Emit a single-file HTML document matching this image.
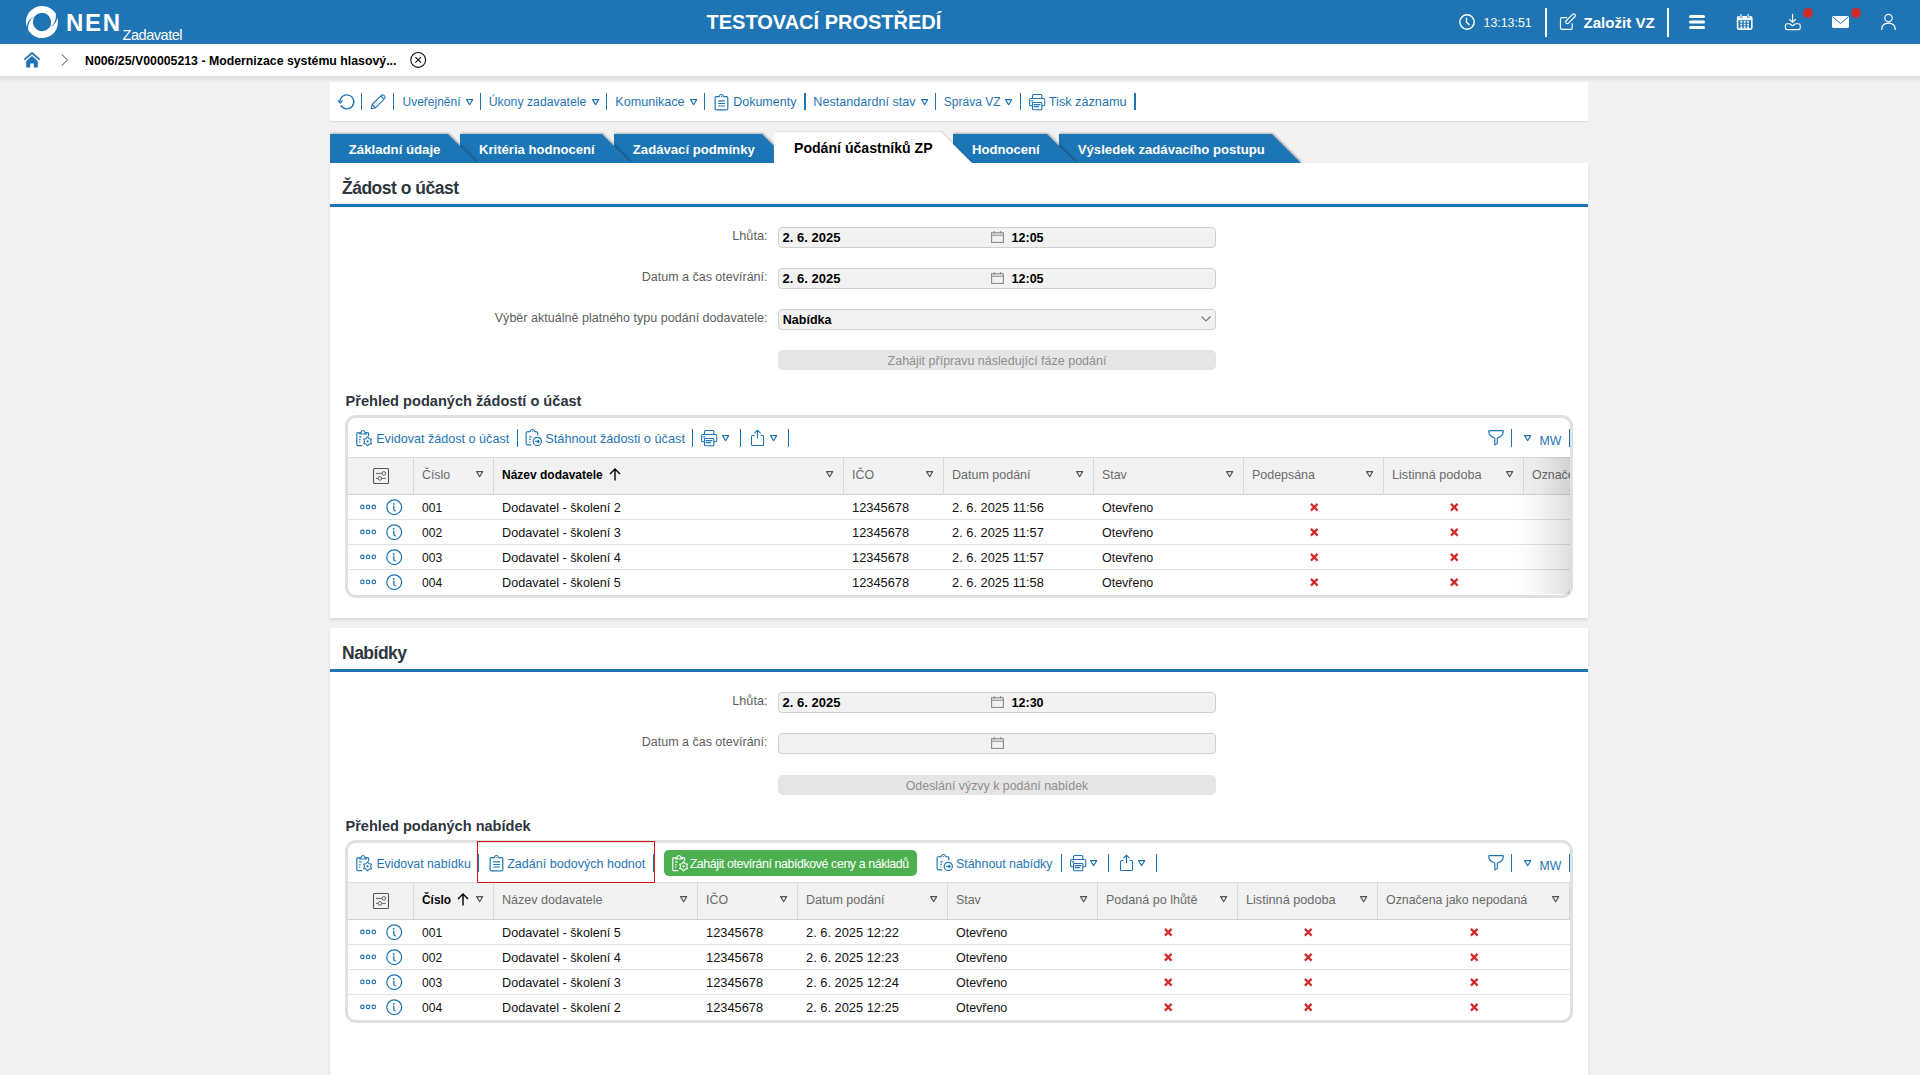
<!DOCTYPE html>
<html><head><meta charset="utf-8"><title>NEN</title>
<style>
html,body{margin:0;padding:0;width:1920px;height:1075px;overflow:hidden;background:#f2f2f2;font-family:"Liberation Sans",sans-serif;}
.t{position:absolute;line-height:1.117;white-space:nowrap;}
svg{overflow:visible}
</style></head><body>

<div style="position:absolute;left:0px;top:0px;width:1920px;height:44px;background:#1f75b4"></div>
<svg style="position:absolute;left:25px;top:6px;" width="34" height="33" viewBox="0 0 34 33"><path d="M1.62 20.41 A16 16 0 0 1 30.86 8.00 Q31.75 17.16 24.23 21.85 A9.3 9.3 0 1 0 9.57 10.40 Q2.62 13.46 1.62 20.41 Z" fill="#fff"/><path d="M32.38 11.59 A16 16 0 0 1 3.14 24.00 Q2.25 14.84 9.77 10.15 A9.3 9.3 0 1 0 24.43 21.60 Q31.38 18.54 32.38 11.59 Z" fill="#fff"/></svg>
<div class="t" style="left:66px;top:10.280px;font-size:24px;font-weight:700;color:#fff;letter-spacing:1.7px">NEN</div>
<div class="t" style="left:122.5px;top:26.877px;font-size:14.5px;font-weight:400;color:#fff;letter-spacing:-0.45px">Zadavatel</div>
<div class="t" style="left:706.5px;top:10.900px;font-size:20px;font-weight:700;color:#fff;">TESTOVACÍ PROSTŘEDÍ</div>
<svg style="position:absolute;left:1459px;top:14px;" width="16" height="16" viewBox="0 0 16 16"><circle cx="8" cy="8" r="7.2" fill="none" stroke="#fff" stroke-width="1.4"/><path d="M7.5 3.8 V8.2 L10.5 11" fill="none" stroke="#fff" stroke-width="1.4"/></svg>
<div class="t" style="left:1483.5px;top:16.778px;font-size:12.4px;font-weight:400;color:#fff;">13:13:51</div>
<div style="position:absolute;left:1545px;top:8px;width:2px;height:29px;background:#fff"></div>
<svg style="position:absolute;left:1559px;top:14px;" width="18" height="17" viewBox="0 0 18 17"><path d="M8 3.7 H2.9 Q1.5 3.7 1.5 5.1 V13.9 Q1.5 15.3 2.9 15.3 H11.8 Q13.2 15.3 13.2 13.9 V9.3" fill="none" stroke="#fff" stroke-width="1.2"/><rect x="5.45" y="3.1" width="12.2" height="3.3" rx="1.65" fill="none" stroke="#fff" stroke-width="1.2" transform="rotate(-45 11.55 4.75)"/></svg>
<div class="t" style="left:1583.5px;top:15.335px;font-size:15.1px;font-weight:700;color:#fff;">Založit VZ</div>
<div style="position:absolute;left:1667px;top:8px;width:2px;height:29px;background:#fff"></div>
<svg style="position:absolute;left:1689px;top:15px;" width="16" height="14" viewBox="0 0 16 14"><rect x="0" y="0" width="16" height="3" rx="1.5" fill="#fff"/><rect x="0" y="5.5" width="16" height="3" rx="1.5" fill="#fff"/><rect x="0" y="11" width="16" height="3" rx="1.5" fill="#fff"/></svg>
<svg style="position:absolute;left:1736px;top:14px;" width="17" height="16" viewBox="0 0 17 16"><rect x="1.6" y="2.9" width="14.2" height="12.2" rx="1.3" fill="none" stroke="#fff" stroke-width="1.6"/>
<rect x="1.6" y="2.9" width="14.2" height="3.3" fill="#fff"/>
<rect x="3.7" y="-0.3" width="2.6" height="4.4" fill="#1f75b4"/><rect x="10.9" y="-0.3" width="2.6" height="4.4" fill="#1f75b4"/>
<rect x="4.45" y="0" width="1.1" height="3.9" fill="#fff"/><rect x="11.65" y="0" width="1.1" height="3.9" fill="#fff"/>
<g fill="#fff"><rect x="4.3" y="7.0" width="1.9" height="1.7"/><rect x="7.75" y="7.0" width="1.9" height="1.7"/><rect x="11.1" y="7.0" width="1.9" height="1.7"/><rect x="4.3" y="9.7" width="1.9" height="1.7"/><rect x="7.75" y="9.7" width="1.9" height="1.7"/><rect x="11.1" y="9.7" width="1.9" height="1.7"/><rect x="4.3" y="12.4" width="1.9" height="1.7"/><rect x="7.75" y="12.4" width="1.9" height="1.7"/><rect x="11.1" y="12.4" width="1.9" height="1.7"/></g></svg>
<svg style="position:absolute;left:1784px;top:13px;" width="18" height="18" viewBox="0 0 18 18"><path d="M3.2 10.7 H5 Q6.3 10.7 7 11.6 Q8.6 13.6 10.2 11.6 Q10.9 10.7 12.2 10.7 H14.4 Q16.2 10.7 16.2 12.5 V14.9 Q16.2 16.6 14.4 16.6 H3.2 Q1.4 16.6 1.4 14.9 V12.5 Q1.4 10.7 3.2 10.7 Z" fill="none" stroke="#fff" stroke-width="1.15"/><path d="M8.6 1.2 V9.3 M5.7 6.5 L8.6 9.4 L11.5 6.5" fill="none" stroke="#fff" stroke-width="1.15" stroke-linecap="round" stroke-linejoin="round"/></svg>
<svg style="position:absolute;left:1803px;top:8px;" width="10" height="10" viewBox="0 0 10 10"><circle cx="5" cy="5" r="5" fill="#d12a2a"/></svg>
<svg style="position:absolute;left:1832px;top:16px;" width="17" height="12" viewBox="0 0 17 12"><rect x="0" y="0" width="17" height="12" rx="1.5" fill="#fff"/><path d="M1 1.2 L8.5 7.5 L16 1.2" fill="none" stroke="#1f75b4" stroke-width="1"/></svg>
<svg style="position:absolute;left:1851px;top:8px;" width="10" height="10" viewBox="0 0 10 10"><circle cx="5" cy="5" r="5" fill="#d12a2a"/></svg>
<svg style="position:absolute;left:1880px;top:14px;" width="17" height="17" viewBox="0 0 17 17"><circle cx="8.5" cy="4.1" r="3.7" fill="none" stroke="#fff" stroke-width="1.15"/><path d="M1.7 16 Q1.7 9.1 8.5 9.1 Q15.3 9.1 15.3 16" fill="none" stroke="#fff" stroke-width="1.15"/></svg>
<div style="position:absolute;left:0px;top:44px;width:1920px;height:32px;background:#fff"></div>
<div style="position:absolute;left:0px;top:76px;width:1920px;height:6px;background:linear-gradient(#dcdcdc,#f2f2f2)"></div>
<svg style="position:absolute;left:24px;top:52px;" width="16" height="16" viewBox="0 0 16 16"><path d="M1 7.2 L8 1 L15 7.2" fill="none" stroke="#1f75b4" stroke-width="1.8" stroke-linejoin="round" stroke-linecap="round"/><path d="M2.2 9 L8 4 L13.8 9 V15.5 H9.8 V11.5 H6.2 V15.5 H2.2 Z" fill="#1f75b4"/></svg>
<svg style="position:absolute;left:61px;top:54px;" width="8" height="12" viewBox="0 0 8 12"><path d="M0.8 0.5 L6.5 6 L0.8 11.5" fill="none" stroke="#445" stroke-width="1"/></svg>
<div class="t" style="left:85px;top:54.850px;font-size:12.32px;font-weight:700;color:#000;">N006/25/V00005213 - Modernizace systému hlasový...</div>
<svg style="position:absolute;left:410px;top:52px;" width="17" height="16" viewBox="0 0 17 16"><circle cx="8.2" cy="7.9" r="7.4" fill="none" stroke="#111" stroke-width="1.15"/><path d="M5.4 5.1 L11 10.7 M11 5.1 L5.4 10.7" stroke="#111" stroke-width="1.15"/></svg>
<div style="position:absolute;left:330px;top:82px;width:1258px;height:39px;background:#fff;box-shadow:0 1px 1px rgba(0,0,0,0.08)"></div>
<svg style="position:absolute;left:338px;top:94px;" width="17" height="16" viewBox="0 0 17 16"><path d="M1.9 7 A7 7 0 1 1 2.8 11.4" fill="none" stroke="#1f75b4" stroke-width="1.35"/><path d="M0.2 6.3 L2.1 9 L4.5 6.6" fill="none" stroke="#1f75b4" stroke-width="1.35" stroke-linejoin="round"/></svg>
<div style="position:absolute;left:360.75px;top:93px;width:1.5px;height:17px;background:#1f75b4"></div>
<svg style="position:absolute;left:370px;top:94px;" width="16" height="16" viewBox="0 0 16 16"><path d="M1.2 14.8 L2.2 10.5 L11.3 1.4 Q12.5 0.3 13.8 1.4 L14.6 2.2 Q15.7 3.5 14.6 4.7 L5.5 13.8 Z M10.8 2 L14 5.2 M2.2 10.5 L5.5 13.8" fill="none" stroke="#1f75b4" stroke-width="1.1" stroke-linejoin="round"/></svg>
<div style="position:absolute;left:392.75px;top:93px;width:1.5px;height:17px;background:#1f75b4"></div>
<div class="t" style="left:402.5px;top:96.140px;font-size:12px;font-weight:400;color:#1f75b4;">Uveřejnění</div>
<svg style="position:absolute;left:465.5px;top:99px;" width="7.3" height="6.3" viewBox="0 0 7.3 6.3"><path d="M0.6 0.6 H6.7 L3.65 5.7 Z" fill="none" stroke="#1f75b4" stroke-width="1.15" stroke-linejoin="round"/></svg>
<div style="position:absolute;left:479.65px;top:93px;width:1.5px;height:17px;background:#1f75b4"></div>
<div class="t" style="left:488.7px;top:95.868px;font-size:12.3px;font-weight:400;color:#1f75b4;">Úkony zadavatele</div>
<svg style="position:absolute;left:591.8px;top:99px;" width="7.3" height="6.3" viewBox="0 0 7.3 6.3"><path d="M0.6 0.6 H6.7 L3.65 5.7 Z" fill="none" stroke="#1f75b4" stroke-width="1.15" stroke-linejoin="round"/></svg>
<div style="position:absolute;left:605.85px;top:93px;width:1.5px;height:17px;background:#1f75b4"></div>
<div class="t" style="left:615.3px;top:94.597px;font-size:12.6px;font-weight:400;color:#1f75b4;">Komunikace</div>
<svg style="position:absolute;left:689.8px;top:99px;" width="7.3" height="6.3" viewBox="0 0 7.3 6.3"><path d="M0.6 0.6 H6.7 L3.65 5.7 Z" fill="none" stroke="#1f75b4" stroke-width="1.15" stroke-linejoin="round"/></svg>
<div style="position:absolute;left:703.85px;top:93px;width:1.5px;height:17px;background:#1f75b4"></div>
<svg style="position:absolute;left:714px;top:94px;" width="15" height="16" viewBox="0 0 15 16"><path d="M4.2 2.7 H2.3 Q1.1 2.7 1.1 3.9 V14.6 Q1.1 15.8 2.3 15.8 H12.6 Q13.8 15.8 13.8 14.6 V3.9 Q13.8 2.7 12.6 2.7 H10.7" fill="none" stroke="#1f75b4" stroke-width="1.2"/><path d="M3.9 3.4 Q4.3 2.4 5.4 2.3 Q5.8 0.5 7.45 0.5 Q9.1 0.5 9.5 2.3 Q10.6 2.4 11 3.4" fill="none" stroke="#1f75b4" stroke-width="1.2"/><circle cx="7.45" cy="2.5" r="0.6" fill="#1f75b4"/><path d="M4.2 6.9 H10.9 M4.2 9.5 H10.9 M4.2 12 H10.9" stroke="#1f75b4" stroke-width="1.2"/></svg>
<div class="t" style="left:733.2px;top:95.688px;font-size:12.5px;font-weight:400;color:#1f75b4;">Dokumenty</div>
<div style="position:absolute;left:804.25px;top:93px;width:1.5px;height:17px;background:#1f75b4"></div>
<div class="t" style="left:813.3px;top:94.597px;font-size:12.6px;font-weight:400;color:#1f75b4;">Nestandardní stav</div>
<svg style="position:absolute;left:920.8px;top:99px;" width="7.3" height="6.3" viewBox="0 0 7.3 6.3"><path d="M0.6 0.6 H6.7 L3.65 5.7 Z" fill="none" stroke="#1f75b4" stroke-width="1.15" stroke-linejoin="round"/></svg>
<div style="position:absolute;left:934.75px;top:93px;width:1.5px;height:17px;background:#1f75b4"></div>
<div class="t" style="left:943.8px;top:96.140px;font-size:12px;font-weight:400;color:#1f75b4;">Správa VZ</div>
<svg style="position:absolute;left:1005.3px;top:99px;" width="7.3" height="6.3" viewBox="0 0 7.3 6.3"><path d="M0.6 0.6 H6.7 L3.65 5.7 Z" fill="none" stroke="#1f75b4" stroke-width="1.15" stroke-linejoin="round"/></svg>
<div style="position:absolute;left:1019.75px;top:93px;width:1.5px;height:17px;background:#1f75b4"></div>
<svg style="position:absolute;left:1029px;top:93px;" width="17" height="18" viewBox="0 0 17 18"><rect x="3.5" y="1.5" width="9.3" height="5" rx="1" fill="none" stroke="#1f75b4" stroke-width="1.1"/><rect x="0.55" y="5.5" width="15.2" height="7.2" rx="1.3" fill="#fff" stroke="#1f75b4" stroke-width="1.1"/><path d="M2.3 7.9 H3.9" stroke="#1f75b4" stroke-width="1.1" stroke-linecap="round"/><rect x="3.5" y="9.5" width="9.3" height="7.3" rx="0.8" fill="#fff" stroke="#1f75b4" stroke-width="1.1"/><path d="M5 11.6 H11 M5 13.6 H9.6" stroke="#1f75b4" stroke-width="1.1" stroke-linecap="round"/></svg>
<div class="t" style="left:1048.8px;top:94.507px;font-size:12.7px;font-weight:400;color:#1f75b4;">Tisk záznamu</div>
<div style="position:absolute;left:1134.05px;top:93px;width:1.5px;height:17px;background:#1f75b4"></div>
<svg style="position:absolute;left:0px;top:0px;" width="1920" height="170" viewBox="0 0 1920 170"><defs><filter id="sh" x="-10%" y="-50%" width="120%" height="200%"><feDropShadow dx="1" dy="-1" stdDeviation="0.8" flood-color="#000" flood-opacity="0.28"/></filter><filter id="sh2" x="-10%" y="-50%" width="120%" height="200%"><feDropShadow dx="1" dy="-0.6" stdDeviation="0.7" flood-color="#000" flood-opacity="0.12"/></filter></defs><path d="M1059 163 V134 H1272 L1301 163 Z" fill="#1f75b4" filter="url(#sh)"/><path d="M953 163 V134 H1047 L1076 163 Z" fill="#1f75b4" filter="url(#sh)"/><path d="M614 163 V134 H762 L791 163 Z" fill="#1f75b4" filter="url(#sh)"/><path d="M460 163 V134 H602 L631 163 Z" fill="#1f75b4" filter="url(#sh)"/><path d="M330 163 V134 H448 L477 163 Z" fill="#1f75b4" filter="url(#sh)"/><path d="M774 163 V132 H941 L972 163 Z" fill="#fff" filter="url(#sh2)"/></svg>
<div class="t" style="left:348.8px;top:143.054px;font-size:13.2px;font-weight:700;color:#fff;">Základní údaje</div>
<div class="t" style="left:479px;top:143.144px;font-size:13.1px;font-weight:700;color:#fff;">Kritéria hodnocení</div>
<div class="t" style="left:632.8px;top:143.099px;font-size:13.15px;font-weight:700;color:#fff;">Zadávací podmínky</div>
<div class="t" style="left:794px;top:141.239px;font-size:14.1px;font-weight:700;color:#000;">Podání účastníků ZP</div>
<div class="t" style="left:972px;top:143.144px;font-size:13.1px;font-weight:700;color:#fff;">Hodnocení</div>
<div class="t" style="left:1077.8px;top:143.099px;font-size:13.15px;font-weight:700;color:#fff;">Výsledek zadávacího postupu</div>
<div style="position:absolute;left:330px;top:163px;width:1258px;height:455px;background:#fff;box-shadow:0 2px 3px rgba(0,0,0,0.10)"></div>
<div class="t" style="left:342px;top:179.162px;font-size:17.5px;font-weight:700;color:#2e3640;letter-spacing:-0.5px">Žádost o účast</div>
<div style="position:absolute;left:330px;top:204px;width:1258px;height:3px;background:#1f75b4"></div>
<div class="t" style="right:1152.5px;top:228.506px;font-size:12.7px;font-weight:400;color:#5e5e5e;">Lhůta:</div>
<div style="position:absolute;left:778px;top:227px;width:438px;height:21px;box-sizing:border-box;background:#f2f2f2;border:1px solid #cfcfcf;border-radius:4px"></div>
<div class="t" style="left:782.6px;top:231.235px;font-size:13px;font-weight:700;color:#000;">2. 6. 2025</div>
<svg style="position:absolute;left:991px;top:231px;" width="13" height="12" viewBox="0 0 13 12"><rect x="0.6" y="1.8" width="11.8" height="9.6" fill="none" stroke="#8a8a8a" stroke-width="1.1"/><path d="M0.6 4.3 H12.4 M3.3 0 V2.6 M9.7 0 V2.6" stroke="#8a8a8a" stroke-width="1.1"/></svg>
<div class="t" style="left:1011.6px;top:231.688px;font-size:12.5px;font-weight:700;color:#000;">12:05</div>
<div class="t" style="right:1152.5px;top:270.688px;font-size:12.5px;font-weight:400;color:#5e5e5e;">Datum a čas otevírání:</div>
<div style="position:absolute;left:778px;top:268px;width:438px;height:21px;box-sizing:border-box;background:#f2f2f2;border:1px solid #cfcfcf;border-radius:4px"></div>
<div class="t" style="left:782.6px;top:272.235px;font-size:13px;font-weight:700;color:#000;">2. 6. 2025</div>
<svg style="position:absolute;left:991px;top:272px;" width="13" height="12" viewBox="0 0 13 12"><rect x="0.6" y="1.8" width="11.8" height="9.6" fill="none" stroke="#8a8a8a" stroke-width="1.1"/><path d="M0.6 4.3 H12.4 M3.3 0 V2.6 M9.7 0 V2.6" stroke="#8a8a8a" stroke-width="1.1"/></svg>
<div class="t" style="left:1011.6px;top:272.688px;font-size:12.5px;font-weight:700;color:#000;">12:05</div>
<div class="t" style="right:1152.5px;top:310.642px;font-size:12.55px;font-weight:400;color:#5e5e5e;">Výběr aktuálně platného typu podání dodavatele:</div>
<div style="position:absolute;left:778px;top:309px;width:438px;height:21px;box-sizing:border-box;background:#f2f2f2;border:1px solid #cfcfcf;border-radius:4px"></div>
<div class="t" style="left:782.8px;top:313.688px;font-size:12.5px;font-weight:700;color:#000;">Nabídka</div>
<svg style="position:absolute;left:1201px;top:316px;" width="10" height="6" viewBox="0 0 10 6"><path d="M0.5 0.5 L5 5 L9.5 0.5" fill="none" stroke="#777" stroke-width="1.1"/></svg>
<div style="position:absolute;left:778px;top:350px;width:438px;height:20px;background:#e5e5e5;border-radius:5px"></div>
<div class="t" style="left:997px;transform:translateX(-50%);top:354.688px;font-size:12.5px;font-weight:400;color:#8f8f8f;">Zahájit přípravu následující fáze podání</div>
<div class="t" style="left:345.5px;top:392.787px;font-size:14.6px;font-weight:700;color:#2e3640;">Přehled podaných žádostí o účast</div>
<div style="position:absolute;left:345px;top:415px;width:1228px;height:183px;box-sizing:border-box;border:3px solid #dfe0e1;border-radius:11px;background:#fff"></div>
<svg style="position:absolute;left:356px;top:430px;" width="17" height="17" viewBox="0 0 17 17"><path d="M6.3 15.6 H1.6 Q0.8 15.6 0.8 14.8 V3.6 Q0.8 2.8 1.6 2.8 H3.8 M10 2.8 H12 Q12.6 2.8 12.6 3.6 V6.2" fill="none" stroke="#1f75b4" stroke-width="1.15"/>
<path d="M3.8 4 V2.6 H5 Q5.3 0.5 7 0.5 Q8.7 0.5 9 2.6 H10.2 V4 Z" fill="none" stroke="#1f75b4" stroke-width="1.15"/>
<path d="M3.2 6.9 H5.5 M3.2 9.7 H4.6 M3.2 12.2 H4.2" stroke="#1f75b4" stroke-width="1.2"/>
<path d="M11.60 6.90 L13.15 8.72 L15.50 9.15 L14.70 11.40 L15.50 13.65 L13.15 14.08 L11.60 15.90 L10.05 14.08 L7.70 13.65 L8.50 11.40 L7.70 9.15 L10.05 8.72 Z" fill="none" stroke="#1f75b4" stroke-width="1.1" stroke-linejoin="round"/>
<circle cx="11.6" cy="11.4" r="1.1" fill="#1f75b4"/></svg>
<div class="t" style="left:376.2px;top:431.597px;font-size:12.6px;font-weight:400;color:#1f75b4;">Evidovat žádost o účast</div>
<div style="position:absolute;left:516.75px;top:429px;width:1.5px;height:18px;background:#1f75b4"></div>
<svg style="position:absolute;left:525px;top:428.8px;" width="18" height="18" viewBox="0 0 18 18"><path d="M6.2 15.8 H2.3 Q1.1 15.8 1.1 14.6 V3.9 Q1.1 2.7 2.3 2.7 H4.2 M10.7 2.7 H11.6 Q12.8 2.7 12.8 3.9 V6.4" fill="none" stroke="#1f75b4" stroke-width="1.15"/>
<path d="M3.9 3.4 Q4.3 2.4 5.4 2.3 Q5.8 0.5 7.45 0.5 Q9.1 0.5 9.5 2.3 Q10.6 2.4 11 3.4" fill="none" stroke="#1f75b4" stroke-width="1.15"/><circle cx="7.45" cy="2.5" r="0.6" fill="#1f75b4"/>
<path d="M4.2 7.9 H6.6 M4.2 10.4 H5.8 M4.2 13 H5.5" stroke="#1f75b4" stroke-width="1.2"/>
<circle cx="12.3" cy="12.4" r="4.1" fill="#fff" stroke="#1f75b4" stroke-width="1.15"/>
<path d="M10.1 12.4 H14.3 M12.7 10.8 L14.3 12.4 L12.7 14" fill="none" stroke="#1f75b4" stroke-width="1.15" stroke-linejoin="round"/></svg>
<div class="t" style="left:545.3px;top:432.461px;font-size:12.75px;font-weight:400;color:#1f75b4;">Stáhnout žádosti o účast</div>
<div style="position:absolute;left:691.75px;top:429px;width:1.5px;height:18px;background:#1f75b4"></div>
<svg style="position:absolute;left:701px;top:429px;" width="17" height="18" viewBox="0 0 17 18"><rect x="3.5" y="1.5" width="9.3" height="5" rx="1" fill="none" stroke="#1f75b4" stroke-width="1.1"/><rect x="0.55" y="5.5" width="15.2" height="7.2" rx="1.3" fill="#fff" stroke="#1f75b4" stroke-width="1.1"/><path d="M2.3 7.9 H3.9" stroke="#1f75b4" stroke-width="1.1" stroke-linecap="round"/><rect x="3.5" y="9.5" width="9.3" height="7.3" rx="0.8" fill="#fff" stroke="#1f75b4" stroke-width="1.1"/><path d="M5 11.6 H11 M5 13.6 H9.6" stroke="#1f75b4" stroke-width="1.1" stroke-linecap="round"/></svg>
<svg style="position:absolute;left:721.5px;top:435px;" width="7.3" height="6.3" viewBox="0 0 7.3 6.3"><path d="M0.6 0.6 H6.7 L3.65 5.7 Z" fill="none" stroke="#1f75b4" stroke-width="1.15" stroke-linejoin="round"/></svg>
<div style="position:absolute;left:739.75px;top:429px;width:1.5px;height:18px;background:#1f75b4"></div>
<svg style="position:absolute;left:750px;top:429px;" width="15" height="18" viewBox="0 0 15 18"><path d="M4.3 6.5 H2.6 Q1.5 6.5 1.5 7.6 V15.4 Q1.5 16.5 2.6 16.5 H12.4 Q13.5 16.5 13.5 15.4 V7.6 Q13.5 6.5 12.4 6.5 H10.7" fill="none" stroke="#1f75b4" stroke-width="1.1"/><path d="M7.5 9 V1.3 M4.8 3.9 L7.5 1.2 L10.2 3.9" fill="none" stroke="#1f75b4" stroke-width="1.1" stroke-linecap="round" stroke-linejoin="round"/></svg>
<svg style="position:absolute;left:770px;top:435px;" width="7.3" height="6.3" viewBox="0 0 7.3 6.3"><path d="M0.6 0.6 H6.7 L3.65 5.7 Z" fill="none" stroke="#1f75b4" stroke-width="1.15" stroke-linejoin="round"/></svg>
<div style="position:absolute;left:787.85px;top:429px;width:1.5px;height:18px;background:#1f75b4"></div>
<svg style="position:absolute;left:1487px;top:429px;" width="18" height="18" viewBox="0 0 18 18"><path d="M2.4 1.6 H15.6 Q16.5 1.6 16.4 2.6 Q16 7.2 10.3 9 V14.6 L7.8 16 V9 Q2.1 7.2 1.7 2.6 Q1.6 1.6 2.4 1.6 Z" fill="none" stroke="#1f75b4" stroke-width="1.15" stroke-linejoin="round"/></svg>
<div style="position:absolute;left:1510.65px;top:429px;width:1.5px;height:18px;background:#1f75b4"></div>
<svg style="position:absolute;left:1524px;top:435px;" width="7.3" height="6.3" viewBox="0 0 7.3 6.3"><path d="M0.6 0.6 H6.7 L3.65 5.7 Z" fill="none" stroke="#1f75b4" stroke-width="1.15" stroke-linejoin="round"/></svg>
<div class="t" style="left:1539.5px;top:434.868px;font-size:12.3px;font-weight:400;color:#1f75b4;">MW</div>
<div style="position:absolute;left:1568.55px;top:429px;width:1.5px;height:18px;background:#1f75b4"></div>
<div style="position:absolute;left:0;top:0;width:1570px;height:600px;overflow:hidden">
<div style="position:absolute;left:348px;top:457px;width:1222px;height:37px;background:#f2f2f2;border-top:1px solid #dcdcdc;box-sizing:border-box"></div>
<div style="position:absolute;left:348px;top:494px;width:1222px;height:1px;background:#d3d3d3"></div>
<div style="position:absolute;left:412.5px;top:457px;width:1px;height:37px;background:#d9d9d9"></div>
<div style="position:absolute;left:492.5px;top:457px;width:1px;height:37px;background:#d9d9d9"></div>
<div style="position:absolute;left:842.5px;top:457px;width:1px;height:37px;background:#d9d9d9"></div>
<div style="position:absolute;left:942.5px;top:457px;width:1px;height:37px;background:#d9d9d9"></div>
<div style="position:absolute;left:1092.5px;top:457px;width:1px;height:37px;background:#d9d9d9"></div>
<div style="position:absolute;left:1242.5px;top:457px;width:1px;height:37px;background:#d9d9d9"></div>
<div style="position:absolute;left:1382.5px;top:457px;width:1px;height:37px;background:#d9d9d9"></div>
<div style="position:absolute;left:1522.5px;top:457px;width:1px;height:37px;background:#d9d9d9"></div>
<svg style="position:absolute;left:373px;top:468px;" width="16" height="16" viewBox="0 0 16 16"><rect x="0.5" y="0.5" width="15" height="15" rx="1" fill="none" stroke="#555" stroke-width="1.1"/><path d="M3 5.4 H12.8 M3 10.4 H12.8" stroke="#555" stroke-width="0.9"/><circle cx="10.85" cy="5.4" r="1.8" fill="#f2f2f2" stroke="#555" stroke-width="0.9"/><circle cx="6.9" cy="10.4" r="1.8" fill="#f2f2f2" stroke="#555" stroke-width="0.9"/></svg>
<div class="t" style="left:422px;top:468.868px;font-size:12.3px;font-weight:400;color:#6a6a6a;">Číslo</div>
<svg style="position:absolute;left:476px;top:471px;" width="7.3" height="6.3" viewBox="0 0 7.3 6.3"><path d="M0.6 0.6 H6.7 L3.65 5.7 Z" fill="none" stroke="#555" stroke-width="1.15" stroke-linejoin="round"/></svg>
<div class="t" style="left:502px;top:469.140px;font-size:12.0px;font-weight:700;color:#000;">Název dodavatele</div>
<svg style="position:absolute;left:826px;top:471px;" width="7.3" height="6.3" viewBox="0 0 7.3 6.3"><path d="M0.6 0.6 H6.7 L3.65 5.7 Z" fill="none" stroke="#555" stroke-width="1.15" stroke-linejoin="round"/></svg>
<div class="t" style="left:852px;top:468.778px;font-size:12.4px;font-weight:400;color:#6a6a6a;">IČO</div>
<svg style="position:absolute;left:926px;top:471px;" width="7.3" height="6.3" viewBox="0 0 7.3 6.3"><path d="M0.6 0.6 H6.7 L3.65 5.7 Z" fill="none" stroke="#555" stroke-width="1.15" stroke-linejoin="round"/></svg>
<div class="t" style="left:952px;top:468.688px;font-size:12.5px;font-weight:400;color:#6a6a6a;">Datum podání</div>
<svg style="position:absolute;left:1076px;top:471px;" width="7.3" height="6.3" viewBox="0 0 7.3 6.3"><path d="M0.6 0.6 H6.7 L3.65 5.7 Z" fill="none" stroke="#555" stroke-width="1.15" stroke-linejoin="round"/></svg>
<div class="t" style="left:1102px;top:468.778px;font-size:12.4px;font-weight:400;color:#6a6a6a;">Stav</div>
<svg style="position:absolute;left:1226px;top:471px;" width="7.3" height="6.3" viewBox="0 0 7.3 6.3"><path d="M0.6 0.6 H6.7 L3.65 5.7 Z" fill="none" stroke="#555" stroke-width="1.15" stroke-linejoin="round"/></svg>
<div class="t" style="left:1252px;top:468.733px;font-size:12.45px;font-weight:400;color:#6a6a6a;">Podepsána</div>
<svg style="position:absolute;left:1366px;top:471px;" width="7.3" height="6.3" viewBox="0 0 7.3 6.3"><path d="M0.6 0.6 H6.7 L3.65 5.7 Z" fill="none" stroke="#555" stroke-width="1.15" stroke-linejoin="round"/></svg>
<div class="t" style="left:1392px;top:467.507px;font-size:12.7px;font-weight:400;color:#6a6a6a;">Listinná podoba</div>
<svg style="position:absolute;left:1506px;top:471px;" width="7.3" height="6.3" viewBox="0 0 7.3 6.3"><path d="M0.6 0.6 H6.7 L3.65 5.7 Z" fill="none" stroke="#555" stroke-width="1.15" stroke-linejoin="round"/></svg>
<div class="t" style="left:1532px;top:468.778px;font-size:12.4px;font-weight:400;color:#6a6a6a;">Označena jako nepodaná</div>
<svg style="position:absolute;left:1698px;top:471px;" width="7.3" height="6.3" viewBox="0 0 7.3 6.3"><path d="M0.6 0.6 H6.7 L3.65 5.7 Z" fill="none" stroke="#555" stroke-width="1.15" stroke-linejoin="round"/></svg>
<div style="position:absolute;left:348px;top:519px;width:1222px;height:1px;background:#e2e2e2"></div>
<svg style="position:absolute;left:360px;top:504px;" width="17" height="6" viewBox="0 0 17 6"><circle cx="2.4" cy="2.9" r="1.75" fill="none" stroke="#1f75b4" stroke-width="1.15"/><circle cx="8.1" cy="2.9" r="1.75" fill="none" stroke="#1f75b4" stroke-width="1.15"/><circle cx="13.8" cy="2.9" r="1.75" fill="none" stroke="#1f75b4" stroke-width="1.15"/></svg>
<svg style="position:absolute;left:386px;top:499px;" width="17" height="17" viewBox="0 0 17 17"><circle cx="8.2" cy="8.2" r="7.4" fill="none" stroke="#1f75b4" stroke-width="1.25"/><path d="M7.7 7 L7.9 10.6 Q8.1 11.7 9.3 11.8" fill="none" stroke="#1f75b4" stroke-width="1.25" stroke-linecap="round"/><circle cx="7.7" cy="4.9" r="0.85" fill="#1f75b4"/></svg>
<div class="t" style="left:422px;top:502.050px;font-size:12.1px;font-weight:400;color:#111;">001</div>
<div class="t" style="left:502px;top:500.534px;font-size:12.67px;font-weight:400;color:#111;">Dodavatel - školení 2</div>
<div class="t" style="left:852px;top:501.371px;font-size:12.85px;font-weight:400;color:#111;">12345678</div>
<div class="t" style="left:952px;top:501.371px;font-size:12.85px;font-weight:400;color:#111;">2. 6. 2025 11:56</div>
<div class="t" style="left:1102px;top:501.715px;font-size:12.47px;font-weight:400;color:#111;">Otevřeno</div>
<svg style="position:absolute;left:1309.75px;top:502.75px;" width="8.5" height="8.5" viewBox="0 0 8.5 8.5"><path d="M0.9 0.9 L7.6 7.6 M7.6 0.9 L0.9 7.6" stroke="#d12a2a" stroke-width="2.2"/></svg>
<svg style="position:absolute;left:1449.75px;top:502.75px;" width="8.5" height="8.5" viewBox="0 0 8.5 8.5"><path d="M0.9 0.9 L7.6 7.6 M7.6 0.9 L0.9 7.6" stroke="#d12a2a" stroke-width="2.2"/></svg>
<div style="position:absolute;left:348px;top:544px;width:1222px;height:1px;background:#e2e2e2"></div>
<svg style="position:absolute;left:360px;top:529px;" width="17" height="6" viewBox="0 0 17 6"><circle cx="2.4" cy="2.9" r="1.75" fill="none" stroke="#1f75b4" stroke-width="1.15"/><circle cx="8.1" cy="2.9" r="1.75" fill="none" stroke="#1f75b4" stroke-width="1.15"/><circle cx="13.8" cy="2.9" r="1.75" fill="none" stroke="#1f75b4" stroke-width="1.15"/></svg>
<svg style="position:absolute;left:386px;top:524px;" width="17" height="17" viewBox="0 0 17 17"><circle cx="8.2" cy="8.2" r="7.4" fill="none" stroke="#1f75b4" stroke-width="1.25"/><path d="M7.7 7 L7.9 10.6 Q8.1 11.7 9.3 11.8" fill="none" stroke="#1f75b4" stroke-width="1.25" stroke-linecap="round"/><circle cx="7.7" cy="4.9" r="0.85" fill="#1f75b4"/></svg>
<div class="t" style="left:422px;top:527.049px;font-size:12.1px;font-weight:400;color:#111;">002</div>
<div class="t" style="left:502px;top:525.534px;font-size:12.67px;font-weight:400;color:#111;">Dodavatel - školení 3</div>
<div class="t" style="left:852px;top:526.371px;font-size:12.85px;font-weight:400;color:#111;">12345678</div>
<div class="t" style="left:952px;top:526.371px;font-size:12.85px;font-weight:400;color:#111;">2. 6. 2025 11:57</div>
<div class="t" style="left:1102px;top:526.715px;font-size:12.47px;font-weight:400;color:#111;">Otevřeno</div>
<svg style="position:absolute;left:1309.75px;top:527.75px;" width="8.5" height="8.5" viewBox="0 0 8.5 8.5"><path d="M0.9 0.9 L7.6 7.6 M7.6 0.9 L0.9 7.6" stroke="#d12a2a" stroke-width="2.2"/></svg>
<svg style="position:absolute;left:1449.75px;top:527.75px;" width="8.5" height="8.5" viewBox="0 0 8.5 8.5"><path d="M0.9 0.9 L7.6 7.6 M7.6 0.9 L0.9 7.6" stroke="#d12a2a" stroke-width="2.2"/></svg>
<div style="position:absolute;left:348px;top:569px;width:1222px;height:1px;background:#e2e2e2"></div>
<svg style="position:absolute;left:360px;top:554px;" width="17" height="6" viewBox="0 0 17 6"><circle cx="2.4" cy="2.9" r="1.75" fill="none" stroke="#1f75b4" stroke-width="1.15"/><circle cx="8.1" cy="2.9" r="1.75" fill="none" stroke="#1f75b4" stroke-width="1.15"/><circle cx="13.8" cy="2.9" r="1.75" fill="none" stroke="#1f75b4" stroke-width="1.15"/></svg>
<svg style="position:absolute;left:386px;top:549px;" width="17" height="17" viewBox="0 0 17 17"><circle cx="8.2" cy="8.2" r="7.4" fill="none" stroke="#1f75b4" stroke-width="1.25"/><path d="M7.7 7 L7.9 10.6 Q8.1 11.7 9.3 11.8" fill="none" stroke="#1f75b4" stroke-width="1.25" stroke-linecap="round"/><circle cx="7.7" cy="4.9" r="0.85" fill="#1f75b4"/></svg>
<div class="t" style="left:422px;top:552.049px;font-size:12.1px;font-weight:400;color:#111;">003</div>
<div class="t" style="left:502px;top:550.534px;font-size:12.67px;font-weight:400;color:#111;">Dodavatel - školení 4</div>
<div class="t" style="left:852px;top:551.371px;font-size:12.85px;font-weight:400;color:#111;">12345678</div>
<div class="t" style="left:952px;top:551.371px;font-size:12.85px;font-weight:400;color:#111;">2. 6. 2025 11:57</div>
<div class="t" style="left:1102px;top:551.715px;font-size:12.47px;font-weight:400;color:#111;">Otevřeno</div>
<svg style="position:absolute;left:1309.75px;top:552.75px;" width="8.5" height="8.5" viewBox="0 0 8.5 8.5"><path d="M0.9 0.9 L7.6 7.6 M7.6 0.9 L0.9 7.6" stroke="#d12a2a" stroke-width="2.2"/></svg>
<svg style="position:absolute;left:1449.75px;top:552.75px;" width="8.5" height="8.5" viewBox="0 0 8.5 8.5"><path d="M0.9 0.9 L7.6 7.6 M7.6 0.9 L0.9 7.6" stroke="#d12a2a" stroke-width="2.2"/></svg>
<svg style="position:absolute;left:360px;top:579px;" width="17" height="6" viewBox="0 0 17 6"><circle cx="2.4" cy="2.9" r="1.75" fill="none" stroke="#1f75b4" stroke-width="1.15"/><circle cx="8.1" cy="2.9" r="1.75" fill="none" stroke="#1f75b4" stroke-width="1.15"/><circle cx="13.8" cy="2.9" r="1.75" fill="none" stroke="#1f75b4" stroke-width="1.15"/></svg>
<svg style="position:absolute;left:386px;top:574px;" width="17" height="17" viewBox="0 0 17 17"><circle cx="8.2" cy="8.2" r="7.4" fill="none" stroke="#1f75b4" stroke-width="1.25"/><path d="M7.7 7 L7.9 10.6 Q8.1 11.7 9.3 11.8" fill="none" stroke="#1f75b4" stroke-width="1.25" stroke-linecap="round"/><circle cx="7.7" cy="4.9" r="0.85" fill="#1f75b4"/></svg>
<div class="t" style="left:422px;top:577.049px;font-size:12.1px;font-weight:400;color:#111;">004</div>
<div class="t" style="left:502px;top:575.534px;font-size:12.67px;font-weight:400;color:#111;">Dodavatel - školení 5</div>
<div class="t" style="left:852px;top:576.371px;font-size:12.85px;font-weight:400;color:#111;">12345678</div>
<div class="t" style="left:952px;top:576.371px;font-size:12.85px;font-weight:400;color:#111;">2. 6. 2025 11:58</div>
<div class="t" style="left:1102px;top:576.715px;font-size:12.47px;font-weight:400;color:#111;">Otevřeno</div>
<svg style="position:absolute;left:1309.75px;top:577.75px;" width="8.5" height="8.5" viewBox="0 0 8.5 8.5"><path d="M0.9 0.9 L7.6 7.6 M7.6 0.9 L0.9 7.6" stroke="#d12a2a" stroke-width="2.2"/></svg>
<svg style="position:absolute;left:1449.75px;top:577.75px;" width="8.5" height="8.5" viewBox="0 0 8.5 8.5"><path d="M0.9 0.9 L7.6 7.6 M7.6 0.9 L0.9 7.6" stroke="#d12a2a" stroke-width="2.2"/></svg>
<div style="position:absolute;left:1510px;top:457px;width:60px;height:137px;background:linear-gradient(90deg,rgba(0,0,0,0) 0%,rgba(0,0,0,0.03) 45%,rgba(0,0,0,0.13) 100%)"></div>
</div>
<svg style="position:absolute;left:609px;top:468px;" width="12" height="13" viewBox="0 0 12 13"><path d="M6 12.5 V1.2 M1 6 L6 1 L11 6" fill="none" stroke="#000" stroke-width="1.4"/></svg>
<div style="position:absolute;left:330px;top:628px;width:1258px;height:472px;background:#fff;box-shadow:0 2px 3px rgba(0,0,0,0.10)"></div>
<div class="t" style="left:342px;top:644.163px;font-size:17.5px;font-weight:700;color:#2e3640;letter-spacing:-0.5px">Nabídky</div>
<div style="position:absolute;left:330px;top:669px;width:1258px;height:3px;background:#1f75b4"></div>
<div class="t" style="right:1152.5px;top:693.506px;font-size:12.7px;font-weight:400;color:#5e5e5e;">Lhůta:</div>
<div style="position:absolute;left:778px;top:692px;width:438px;height:21px;box-sizing:border-box;background:#f2f2f2;border:1px solid #cfcfcf;border-radius:4px"></div>
<div class="t" style="left:782.6px;top:696.235px;font-size:13px;font-weight:700;color:#000;">2. 6. 2025</div>
<svg style="position:absolute;left:991px;top:696px;" width="13" height="12" viewBox="0 0 13 12"><rect x="0.6" y="1.8" width="11.8" height="9.6" fill="none" stroke="#8a8a8a" stroke-width="1.1"/><path d="M0.6 4.3 H12.4 M3.3 0 V2.6 M9.7 0 V2.6" stroke="#8a8a8a" stroke-width="1.1"/></svg>
<div class="t" style="left:1011.6px;top:696.688px;font-size:12.5px;font-weight:700;color:#000;">12:30</div>
<div class="t" style="right:1152.5px;top:735.688px;font-size:12.5px;font-weight:400;color:#5e5e5e;">Datum a čas otevírání:</div>
<div style="position:absolute;left:778px;top:733px;width:438px;height:21px;box-sizing:border-box;background:#f2f2f2;border:1px solid #cfcfcf;border-radius:4px"></div>
<svg style="position:absolute;left:991px;top:737px;" width="13" height="12" viewBox="0 0 13 12"><rect x="0.6" y="1.8" width="11.8" height="9.6" fill="none" stroke="#8a8a8a" stroke-width="1.1"/><path d="M0.6 4.3 H12.4 M3.3 0 V2.6 M9.7 0 V2.6" stroke="#8a8a8a" stroke-width="1.1"/></svg>
<div style="position:absolute;left:778px;top:775px;width:438px;height:20px;background:#e5e5e5;border-radius:5px"></div>
<div class="t" style="left:997px;transform:translateX(-50%);top:779.778px;font-size:12.4px;font-weight:400;color:#8f8f8f;">Odeslání výzvy k podání nabídek</div>
<div class="t" style="left:345.5px;top:817.832px;font-size:14.55px;font-weight:700;color:#2e3640;">Přehled podaných nabídek</div>
<div style="position:absolute;left:345px;top:840px;width:1228px;height:183px;box-sizing:border-box;border:3px solid #dfe0e1;border-radius:11px;background:#fff"></div>
<svg style="position:absolute;left:356px;top:855px;" width="17" height="17" viewBox="0 0 17 17"><path d="M6.3 15.6 H1.6 Q0.8 15.6 0.8 14.8 V3.6 Q0.8 2.8 1.6 2.8 H3.8 M10 2.8 H12 Q12.6 2.8 12.6 3.6 V6.2" fill="none" stroke="#1f75b4" stroke-width="1.15"/>
<path d="M3.8 4 V2.6 H5 Q5.3 0.5 7 0.5 Q8.7 0.5 9 2.6 H10.2 V4 Z" fill="none" stroke="#1f75b4" stroke-width="1.15"/>
<path d="M3.2 6.9 H5.5 M3.2 9.7 H4.6 M3.2 12.2 H4.2" stroke="#1f75b4" stroke-width="1.2"/>
<path d="M11.60 6.90 L13.15 8.72 L15.50 9.15 L14.70 11.40 L15.50 13.65 L13.15 14.08 L11.60 15.90 L10.05 14.08 L7.70 13.65 L8.50 11.40 L7.70 9.15 L10.05 8.72 Z" fill="none" stroke="#1f75b4" stroke-width="1.1" stroke-linejoin="round"/>
<circle cx="11.6" cy="11.4" r="1.1" fill="#1f75b4"/></svg>
<div class="t" style="left:376.4px;top:857.869px;font-size:12.3px;font-weight:400;color:#1f75b4;">Evidovat nabídku</div>
<div style="position:absolute;left:477.55px;top:854px;width:1.5px;height:18px;background:#1f75b4"></div>
<svg style="position:absolute;left:488.5px;top:855px;" width="15" height="16" viewBox="0 0 15 16"><path d="M4.2 2.7 H2.3 Q1.1 2.7 1.1 3.9 V14.6 Q1.1 15.8 2.3 15.8 H12.6 Q13.8 15.8 13.8 14.6 V3.9 Q13.8 2.7 12.6 2.7 H10.7" fill="none" stroke="#1f75b4" stroke-width="1.2"/><path d="M3.9 3.4 Q4.3 2.4 5.4 2.3 Q5.8 0.5 7.45 0.5 Q9.1 0.5 9.5 2.3 Q10.6 2.4 11 3.4" fill="none" stroke="#1f75b4" stroke-width="1.2"/><circle cx="7.45" cy="2.5" r="0.6" fill="#1f75b4"/><path d="M4.2 6.9 H10.9 M4.2 9.5 H10.9 M4.2 12 H10.9" stroke="#1f75b4" stroke-width="1.2"/></svg>
<div class="t" style="left:507.2px;top:856.642px;font-size:12.55px;font-weight:400;color:#1f75b4;">Zadání bodových hodnot</div>
<div style="position:absolute;left:652.55px;top:854px;width:1.5px;height:18px;background:#1f75b4"></div>
<div style="position:absolute;left:664px;top:850px;width:253px;height:26px;background:#4caf50;border-radius:5px"></div>
<svg style="position:absolute;left:672px;top:855px;" width="17" height="17" viewBox="0 0 17 17"><path d="M6.3 15.6 H1.6 Q0.8 15.6 0.8 14.8 V3.6 Q0.8 2.8 1.6 2.8 H3.8 M10 2.8 H12 Q12.6 2.8 12.6 3.6 V6.2" fill="none" stroke="#fff" stroke-width="1.15"/>
<path d="M3.8 4 V2.6 H5 Q5.3 0.5 7 0.5 Q8.7 0.5 9 2.6 H10.2 V4 Z" fill="none" stroke="#fff" stroke-width="1.15"/>
<path d="M3.2 6.9 H5.5 M3.2 9.7 H4.6 M3.2 12.2 H4.2" stroke="#fff" stroke-width="1.2"/>
<path d="M11.60 6.90 L13.15 8.72 L15.50 9.15 L14.70 11.40 L15.50 13.65 L13.15 14.08 L11.60 15.90 L10.05 14.08 L7.70 13.65 L8.50 11.40 L7.70 9.15 L10.05 8.72 Z" fill="none" stroke="#fff" stroke-width="1.1" stroke-linejoin="round"/>
<circle cx="11.6" cy="11.4" r="1.1" fill="#fff"/></svg>
<div class="t" style="left:689.7px;top:857.778px;font-size:12.4px;font-weight:400;color:#fff;letter-spacing:-0.41px">Zahájit otevírání nabídkové ceny a nákladů</div>
<svg style="position:absolute;left:935.5px;top:853.8px;" width="18" height="18" viewBox="0 0 18 18"><path d="M6.2 15.8 H2.3 Q1.1 15.8 1.1 14.6 V3.9 Q1.1 2.7 2.3 2.7 H4.2 M10.7 2.7 H11.6 Q12.8 2.7 12.8 3.9 V6.4" fill="none" stroke="#1f75b4" stroke-width="1.15"/>
<path d="M3.9 3.4 Q4.3 2.4 5.4 2.3 Q5.8 0.5 7.45 0.5 Q9.1 0.5 9.5 2.3 Q10.6 2.4 11 3.4" fill="none" stroke="#1f75b4" stroke-width="1.15"/><circle cx="7.45" cy="2.5" r="0.6" fill="#1f75b4"/>
<path d="M4.2 7.9 H6.6 M4.2 10.4 H5.8 M4.2 13 H5.5" stroke="#1f75b4" stroke-width="1.2"/>
<circle cx="12.3" cy="12.4" r="4.1" fill="#fff" stroke="#1f75b4" stroke-width="1.15"/>
<path d="M10.1 12.4 H14.3 M12.7 10.8 L14.3 12.4 L12.7 14" fill="none" stroke="#1f75b4" stroke-width="1.15" stroke-linejoin="round"/></svg>
<div class="t" style="left:956px;top:857.778px;font-size:12.4px;font-weight:400;color:#1f75b4;">Stáhnout nabídky</div>
<div style="position:absolute;left:1060.95px;top:854px;width:1.5px;height:18px;background:#1f75b4"></div>
<svg style="position:absolute;left:1070px;top:854px;" width="17" height="18" viewBox="0 0 17 18"><rect x="3.5" y="1.5" width="9.3" height="5" rx="1" fill="none" stroke="#1f75b4" stroke-width="1.1"/><rect x="0.55" y="5.5" width="15.2" height="7.2" rx="1.3" fill="#fff" stroke="#1f75b4" stroke-width="1.1"/><path d="M2.3 7.9 H3.9" stroke="#1f75b4" stroke-width="1.1" stroke-linecap="round"/><rect x="3.5" y="9.5" width="9.3" height="7.3" rx="0.8" fill="#fff" stroke="#1f75b4" stroke-width="1.1"/><path d="M5 11.6 H11 M5 13.6 H9.6" stroke="#1f75b4" stroke-width="1.1" stroke-linecap="round"/></svg>
<svg style="position:absolute;left:1090px;top:860px;" width="7.3" height="6.3" viewBox="0 0 7.3 6.3"><path d="M0.6 0.6 H6.7 L3.65 5.7 Z" fill="none" stroke="#1f75b4" stroke-width="1.15" stroke-linejoin="round"/></svg>
<div style="position:absolute;left:1107.55px;top:854px;width:1.5px;height:18px;background:#1f75b4"></div>
<svg style="position:absolute;left:1118.5px;top:854px;" width="15" height="18" viewBox="0 0 15 18"><path d="M4.3 6.5 H2.6 Q1.5 6.5 1.5 7.6 V15.4 Q1.5 16.5 2.6 16.5 H12.4 Q13.5 16.5 13.5 15.4 V7.6 Q13.5 6.5 12.4 6.5 H10.7" fill="none" stroke="#1f75b4" stroke-width="1.1"/><path d="M7.5 9 V1.3 M4.8 3.9 L7.5 1.2 L10.2 3.9" fill="none" stroke="#1f75b4" stroke-width="1.1" stroke-linecap="round" stroke-linejoin="round"/></svg>
<svg style="position:absolute;left:1138px;top:860px;" width="7.3" height="6.3" viewBox="0 0 7.3 6.3"><path d="M0.6 0.6 H6.7 L3.65 5.7 Z" fill="none" stroke="#1f75b4" stroke-width="1.15" stroke-linejoin="round"/></svg>
<div style="position:absolute;left:1155.55px;top:854px;width:1.5px;height:18px;background:#1f75b4"></div>
<svg style="position:absolute;left:1487px;top:854px;" width="18" height="18" viewBox="0 0 18 18"><path d="M2.4 1.6 H15.6 Q16.5 1.6 16.4 2.6 Q16 7.2 10.3 9 V14.6 L7.8 16 V9 Q2.1 7.2 1.7 2.6 Q1.6 1.6 2.4 1.6 Z" fill="none" stroke="#1f75b4" stroke-width="1.15" stroke-linejoin="round"/></svg>
<div style="position:absolute;left:1510.65px;top:854px;width:1.5px;height:18px;background:#1f75b4"></div>
<svg style="position:absolute;left:1524px;top:860px;" width="7.3" height="6.3" viewBox="0 0 7.3 6.3"><path d="M0.6 0.6 H6.7 L3.65 5.7 Z" fill="none" stroke="#1f75b4" stroke-width="1.15" stroke-linejoin="round"/></svg>
<div class="t" style="left:1539.5px;top:859.869px;font-size:12.3px;font-weight:400;color:#1f75b4;">MW</div>
<div style="position:absolute;left:1568.55px;top:854px;width:1.5px;height:18px;background:#1f75b4"></div>
<div style="position:absolute;left:348px;top:882px;width:1222px;height:37px;background:#f2f2f2;border-top:1px solid #dcdcdc;box-sizing:border-box"></div>
<div style="position:absolute;left:348px;top:919px;width:1222px;height:1px;background:#d3d3d3"></div>
<div style="position:absolute;left:412.5px;top:882px;width:1px;height:37px;background:#d9d9d9"></div>
<div style="position:absolute;left:492.5px;top:882px;width:1px;height:37px;background:#d9d9d9"></div>
<div style="position:absolute;left:696.5px;top:882px;width:1px;height:37px;background:#d9d9d9"></div>
<div style="position:absolute;left:796.5px;top:882px;width:1px;height:37px;background:#d9d9d9"></div>
<div style="position:absolute;left:946.5px;top:882px;width:1px;height:37px;background:#d9d9d9"></div>
<div style="position:absolute;left:1096.5px;top:882px;width:1px;height:37px;background:#d9d9d9"></div>
<div style="position:absolute;left:1236.5px;top:882px;width:1px;height:37px;background:#d9d9d9"></div>
<div style="position:absolute;left:1376.5px;top:882px;width:1px;height:37px;background:#d9d9d9"></div>
<svg style="position:absolute;left:373px;top:893px;" width="16" height="16" viewBox="0 0 16 16"><rect x="0.5" y="0.5" width="15" height="15" rx="1" fill="none" stroke="#555" stroke-width="1.1"/><path d="M3 5.4 H12.8 M3 10.4 H12.8" stroke="#555" stroke-width="0.9"/><circle cx="10.85" cy="5.4" r="1.8" fill="#f2f2f2" stroke="#555" stroke-width="0.9"/><circle cx="6.9" cy="10.4" r="1.8" fill="#f2f2f2" stroke="#555" stroke-width="0.9"/></svg>
<div class="t" style="left:422px;top:894.231px;font-size:11.9px;font-weight:700;color:#000;">Číslo</div>
<svg style="position:absolute;left:476px;top:896px;" width="7.3" height="6.3" viewBox="0 0 7.3 6.3"><path d="M0.6 0.6 H6.7 L3.65 5.7 Z" fill="none" stroke="#555" stroke-width="1.15" stroke-linejoin="round"/></svg>
<div class="t" style="left:502px;top:892.642px;font-size:12.55px;font-weight:400;color:#6a6a6a;">Název dodavatele</div>
<svg style="position:absolute;left:680px;top:896px;" width="7.3" height="6.3" viewBox="0 0 7.3 6.3"><path d="M0.6 0.6 H6.7 L3.65 5.7 Z" fill="none" stroke="#555" stroke-width="1.15" stroke-linejoin="round"/></svg>
<div class="t" style="left:706px;top:893.778px;font-size:12.4px;font-weight:400;color:#6a6a6a;">IČO</div>
<svg style="position:absolute;left:780px;top:896px;" width="7.3" height="6.3" viewBox="0 0 7.3 6.3"><path d="M0.6 0.6 H6.7 L3.65 5.7 Z" fill="none" stroke="#555" stroke-width="1.15" stroke-linejoin="round"/></svg>
<div class="t" style="left:806px;top:893.688px;font-size:12.5px;font-weight:400;color:#6a6a6a;">Datum podání</div>
<svg style="position:absolute;left:930px;top:896px;" width="7.3" height="6.3" viewBox="0 0 7.3 6.3"><path d="M0.6 0.6 H6.7 L3.65 5.7 Z" fill="none" stroke="#555" stroke-width="1.15" stroke-linejoin="round"/></svg>
<div class="t" style="left:956px;top:893.778px;font-size:12.4px;font-weight:400;color:#6a6a6a;">Stav</div>
<svg style="position:absolute;left:1080px;top:896px;" width="7.3" height="6.3" viewBox="0 0 7.3 6.3"><path d="M0.6 0.6 H6.7 L3.65 5.7 Z" fill="none" stroke="#555" stroke-width="1.15" stroke-linejoin="round"/></svg>
<div class="t" style="left:1106px;top:892.642px;font-size:12.55px;font-weight:400;color:#6a6a6a;">Podaná po lhůtě</div>
<svg style="position:absolute;left:1220px;top:896px;" width="7.3" height="6.3" viewBox="0 0 7.3 6.3"><path d="M0.6 0.6 H6.7 L3.65 5.7 Z" fill="none" stroke="#555" stroke-width="1.15" stroke-linejoin="round"/></svg>
<div class="t" style="left:1246px;top:892.506px;font-size:12.7px;font-weight:400;color:#6a6a6a;">Listinná podoba</div>
<svg style="position:absolute;left:1360px;top:896px;" width="7.3" height="6.3" viewBox="0 0 7.3 6.3"><path d="M0.6 0.6 H6.7 L3.65 5.7 Z" fill="none" stroke="#555" stroke-width="1.15" stroke-linejoin="round"/></svg>
<div class="t" style="left:1386px;top:893.778px;font-size:12.4px;font-weight:400;color:#6a6a6a;">Označena jako nepodaná</div>
<svg style="position:absolute;left:1552px;top:896px;" width="7.3" height="6.3" viewBox="0 0 7.3 6.3"><path d="M0.6 0.6 H6.7 L3.65 5.7 Z" fill="none" stroke="#555" stroke-width="1.15" stroke-linejoin="round"/></svg>
<div style="position:absolute;left:348px;top:944px;width:1222px;height:1px;background:#e2e2e2"></div>
<svg style="position:absolute;left:360px;top:929px;" width="17" height="6" viewBox="0 0 17 6"><circle cx="2.4" cy="2.9" r="1.75" fill="none" stroke="#1f75b4" stroke-width="1.15"/><circle cx="8.1" cy="2.9" r="1.75" fill="none" stroke="#1f75b4" stroke-width="1.15"/><circle cx="13.8" cy="2.9" r="1.75" fill="none" stroke="#1f75b4" stroke-width="1.15"/></svg>
<svg style="position:absolute;left:386px;top:924px;" width="17" height="17" viewBox="0 0 17 17"><circle cx="8.2" cy="8.2" r="7.4" fill="none" stroke="#1f75b4" stroke-width="1.25"/><path d="M7.7 7 L7.9 10.6 Q8.1 11.7 9.3 11.8" fill="none" stroke="#1f75b4" stroke-width="1.25" stroke-linecap="round"/><circle cx="7.7" cy="4.9" r="0.85" fill="#1f75b4"/></svg>
<div class="t" style="left:422px;top:927.049px;font-size:12.1px;font-weight:400;color:#111;">001</div>
<div class="t" style="left:502px;top:925.534px;font-size:12.67px;font-weight:400;color:#111;">Dodavatel - školení 5</div>
<div class="t" style="left:706px;top:926.371px;font-size:12.85px;font-weight:400;color:#111;">12345678</div>
<div class="t" style="left:806px;top:926.371px;font-size:12.85px;font-weight:400;color:#111;">2. 6. 2025 12:22</div>
<div class="t" style="left:956px;top:926.715px;font-size:12.47px;font-weight:400;color:#111;">Otevřeno</div>
<svg style="position:absolute;left:1163.75px;top:927.75px;" width="8.5" height="8.5" viewBox="0 0 8.5 8.5"><path d="M0.9 0.9 L7.6 7.6 M7.6 0.9 L0.9 7.6" stroke="#d12a2a" stroke-width="2.2"/></svg>
<svg style="position:absolute;left:1303.75px;top:927.75px;" width="8.5" height="8.5" viewBox="0 0 8.5 8.5"><path d="M0.9 0.9 L7.6 7.6 M7.6 0.9 L0.9 7.6" stroke="#d12a2a" stroke-width="2.2"/></svg>
<svg style="position:absolute;left:1469.75px;top:927.75px;" width="8.5" height="8.5" viewBox="0 0 8.5 8.5"><path d="M0.9 0.9 L7.6 7.6 M7.6 0.9 L0.9 7.6" stroke="#d12a2a" stroke-width="2.2"/></svg>
<div style="position:absolute;left:348px;top:969px;width:1222px;height:1px;background:#e2e2e2"></div>
<svg style="position:absolute;left:360px;top:954px;" width="17" height="6" viewBox="0 0 17 6"><circle cx="2.4" cy="2.9" r="1.75" fill="none" stroke="#1f75b4" stroke-width="1.15"/><circle cx="8.1" cy="2.9" r="1.75" fill="none" stroke="#1f75b4" stroke-width="1.15"/><circle cx="13.8" cy="2.9" r="1.75" fill="none" stroke="#1f75b4" stroke-width="1.15"/></svg>
<svg style="position:absolute;left:386px;top:949px;" width="17" height="17" viewBox="0 0 17 17"><circle cx="8.2" cy="8.2" r="7.4" fill="none" stroke="#1f75b4" stroke-width="1.25"/><path d="M7.7 7 L7.9 10.6 Q8.1 11.7 9.3 11.8" fill="none" stroke="#1f75b4" stroke-width="1.25" stroke-linecap="round"/><circle cx="7.7" cy="4.9" r="0.85" fill="#1f75b4"/></svg>
<div class="t" style="left:422px;top:952.049px;font-size:12.1px;font-weight:400;color:#111;">002</div>
<div class="t" style="left:502px;top:950.534px;font-size:12.67px;font-weight:400;color:#111;">Dodavatel - školení 4</div>
<div class="t" style="left:706px;top:951.371px;font-size:12.85px;font-weight:400;color:#111;">12345678</div>
<div class="t" style="left:806px;top:951.371px;font-size:12.85px;font-weight:400;color:#111;">2. 6. 2025 12:23</div>
<div class="t" style="left:956px;top:951.715px;font-size:12.47px;font-weight:400;color:#111;">Otevřeno</div>
<svg style="position:absolute;left:1163.75px;top:952.75px;" width="8.5" height="8.5" viewBox="0 0 8.5 8.5"><path d="M0.9 0.9 L7.6 7.6 M7.6 0.9 L0.9 7.6" stroke="#d12a2a" stroke-width="2.2"/></svg>
<svg style="position:absolute;left:1303.75px;top:952.75px;" width="8.5" height="8.5" viewBox="0 0 8.5 8.5"><path d="M0.9 0.9 L7.6 7.6 M7.6 0.9 L0.9 7.6" stroke="#d12a2a" stroke-width="2.2"/></svg>
<svg style="position:absolute;left:1469.75px;top:952.75px;" width="8.5" height="8.5" viewBox="0 0 8.5 8.5"><path d="M0.9 0.9 L7.6 7.6 M7.6 0.9 L0.9 7.6" stroke="#d12a2a" stroke-width="2.2"/></svg>
<div style="position:absolute;left:348px;top:994px;width:1222px;height:1px;background:#e2e2e2"></div>
<svg style="position:absolute;left:360px;top:979px;" width="17" height="6" viewBox="0 0 17 6"><circle cx="2.4" cy="2.9" r="1.75" fill="none" stroke="#1f75b4" stroke-width="1.15"/><circle cx="8.1" cy="2.9" r="1.75" fill="none" stroke="#1f75b4" stroke-width="1.15"/><circle cx="13.8" cy="2.9" r="1.75" fill="none" stroke="#1f75b4" stroke-width="1.15"/></svg>
<svg style="position:absolute;left:386px;top:974px;" width="17" height="17" viewBox="0 0 17 17"><circle cx="8.2" cy="8.2" r="7.4" fill="none" stroke="#1f75b4" stroke-width="1.25"/><path d="M7.7 7 L7.9 10.6 Q8.1 11.7 9.3 11.8" fill="none" stroke="#1f75b4" stroke-width="1.25" stroke-linecap="round"/><circle cx="7.7" cy="4.9" r="0.85" fill="#1f75b4"/></svg>
<div class="t" style="left:422px;top:977.049px;font-size:12.1px;font-weight:400;color:#111;">003</div>
<div class="t" style="left:502px;top:975.534px;font-size:12.67px;font-weight:400;color:#111;">Dodavatel - školení 3</div>
<div class="t" style="left:706px;top:976.371px;font-size:12.85px;font-weight:400;color:#111;">12345678</div>
<div class="t" style="left:806px;top:976.371px;font-size:12.85px;font-weight:400;color:#111;">2. 6. 2025 12:24</div>
<div class="t" style="left:956px;top:976.715px;font-size:12.47px;font-weight:400;color:#111;">Otevřeno</div>
<svg style="position:absolute;left:1163.75px;top:977.75px;" width="8.5" height="8.5" viewBox="0 0 8.5 8.5"><path d="M0.9 0.9 L7.6 7.6 M7.6 0.9 L0.9 7.6" stroke="#d12a2a" stroke-width="2.2"/></svg>
<svg style="position:absolute;left:1303.75px;top:977.75px;" width="8.5" height="8.5" viewBox="0 0 8.5 8.5"><path d="M0.9 0.9 L7.6 7.6 M7.6 0.9 L0.9 7.6" stroke="#d12a2a" stroke-width="2.2"/></svg>
<svg style="position:absolute;left:1469.75px;top:977.75px;" width="8.5" height="8.5" viewBox="0 0 8.5 8.5"><path d="M0.9 0.9 L7.6 7.6 M7.6 0.9 L0.9 7.6" stroke="#d12a2a" stroke-width="2.2"/></svg>
<svg style="position:absolute;left:360px;top:1004px;" width="17" height="6" viewBox="0 0 17 6"><circle cx="2.4" cy="2.9" r="1.75" fill="none" stroke="#1f75b4" stroke-width="1.15"/><circle cx="8.1" cy="2.9" r="1.75" fill="none" stroke="#1f75b4" stroke-width="1.15"/><circle cx="13.8" cy="2.9" r="1.75" fill="none" stroke="#1f75b4" stroke-width="1.15"/></svg>
<svg style="position:absolute;left:386px;top:999px;" width="17" height="17" viewBox="0 0 17 17"><circle cx="8.2" cy="8.2" r="7.4" fill="none" stroke="#1f75b4" stroke-width="1.25"/><path d="M7.7 7 L7.9 10.6 Q8.1 11.7 9.3 11.8" fill="none" stroke="#1f75b4" stroke-width="1.25" stroke-linecap="round"/><circle cx="7.7" cy="4.9" r="0.85" fill="#1f75b4"/></svg>
<div class="t" style="left:422px;top:1002.049px;font-size:12.1px;font-weight:400;color:#111;">004</div>
<div class="t" style="left:502px;top:1000.534px;font-size:12.67px;font-weight:400;color:#111;">Dodavatel - školení 2</div>
<div class="t" style="left:706px;top:1001.371px;font-size:12.85px;font-weight:400;color:#111;">12345678</div>
<div class="t" style="left:806px;top:1001.371px;font-size:12.85px;font-weight:400;color:#111;">2. 6. 2025 12:25</div>
<div class="t" style="left:956px;top:1001.715px;font-size:12.47px;font-weight:400;color:#111;">Otevřeno</div>
<svg style="position:absolute;left:1163.75px;top:1002.75px;" width="8.5" height="8.5" viewBox="0 0 8.5 8.5"><path d="M0.9 0.9 L7.6 7.6 M7.6 0.9 L0.9 7.6" stroke="#d12a2a" stroke-width="2.2"/></svg>
<svg style="position:absolute;left:1303.75px;top:1002.75px;" width="8.5" height="8.5" viewBox="0 0 8.5 8.5"><path d="M0.9 0.9 L7.6 7.6 M7.6 0.9 L0.9 7.6" stroke="#d12a2a" stroke-width="2.2"/></svg>
<svg style="position:absolute;left:1469.75px;top:1002.75px;" width="8.5" height="8.5" viewBox="0 0 8.5 8.5"><path d="M0.9 0.9 L7.6 7.6 M7.6 0.9 L0.9 7.6" stroke="#d12a2a" stroke-width="2.2"/></svg>
<div style="position:absolute;left:1569px;top:882px;width:1px;height:37px;background:#d9d9d9"></div>
<svg style="position:absolute;left:457px;top:893px;" width="12" height="13" viewBox="0 0 12 13"><path d="M6 12.5 V1.2 M1 6 L6 1 L11 6" fill="none" stroke="#000" stroke-width="1.4"/></svg>
<div style="position:absolute;left:477px;top:841px;width:178px;height:42px;box-sizing:border-box;border:1px solid #e0101e"></div>
</body></html>
